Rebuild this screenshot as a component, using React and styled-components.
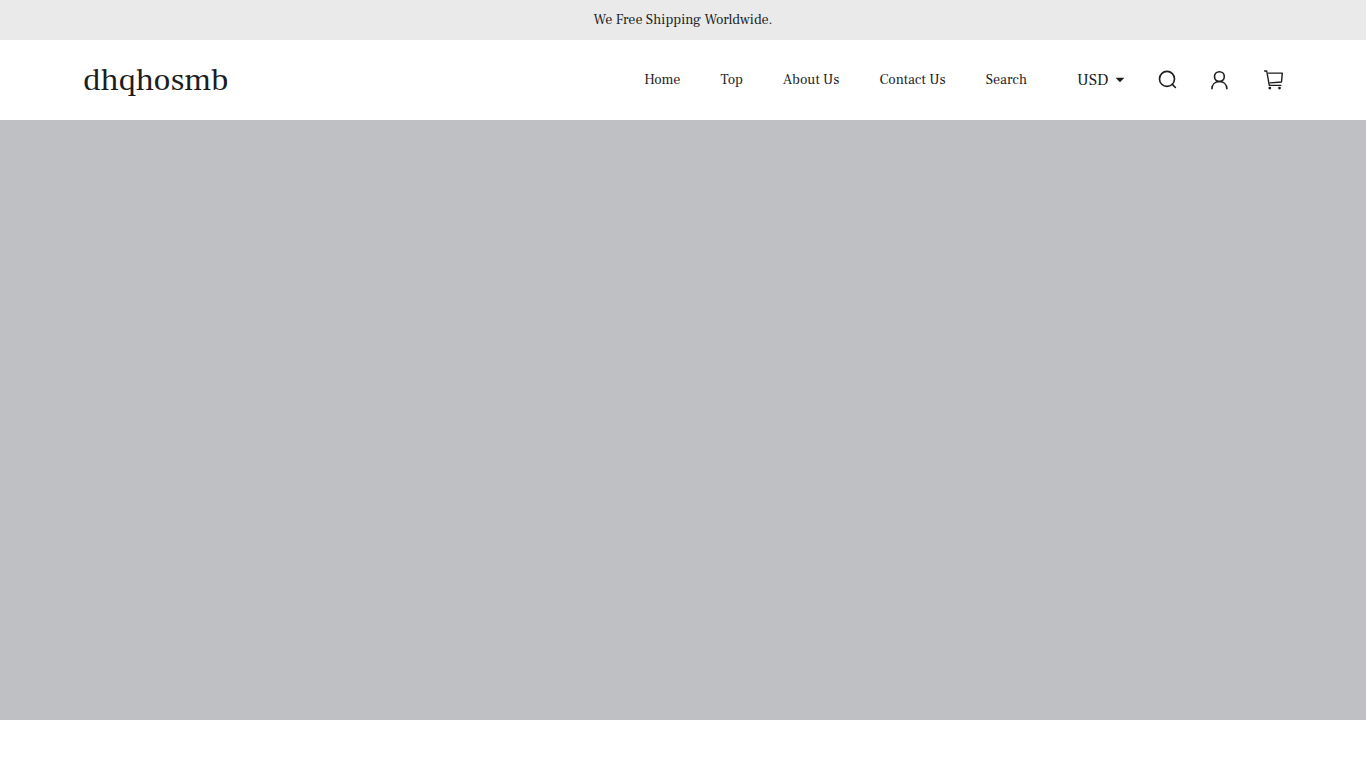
import React from "react";
import styled, { createGlobalStyle } from "styled-components";

const GlobalStyle = createGlobalStyle`
  *, *::before, *::after { box-sizing: border-box; }
  body {
    margin: 0;
    background: #fff;
    color: #1c1d1d;
    font-family: "Frank Ruhl Libre", "DejaVu Serif Condensed", "Liberation Serif", serif;
    font-size: 14px;
    line-height: 20px;
  }
`;

const Announcement = styled.p`
  margin: 0;
  padding: 10px 20px;
  background: #eaeaea;
  text-align: center;
`;

const Header = styled.header`
  display: flex;
  align-items: center;
  justify-content: space-between;
  max-width: 1200px;
  min-height: 80px;
  margin: 0 auto;
`;

const Logo = styled.a`
  color: inherit;
  font-size: 32px;
  line-height: 40px;
  text-decoration: none;
`;

const Tools = styled.div`
  display: flex;
  align-items: center;
`;

const Nav = styled.nav`
  display: flex;
  gap: 40px;
  margin-right: 50px;
`;

const NavLink = styled.a`
  color: inherit;
  text-decoration: none;
`;

const Currency = styled.label`
  display: flex;
  align-items: center;
  gap: 6px;
  margin-right: 32px;
`;

const CurrencySelect = styled.select`
  appearance: none;
  margin: 0;
  padding: 0;
  border: 0;
  background: none;
  color: inherit;
  font-family: inherit;
  font-size: 16px;
  line-height: 20px;
`;

const Actions = styled.div`
  display: flex;
  gap: 32px;
`;

const IconButton = styled.button`
  display: flex;
  padding: 0;
  border: 0;
  background: none;
  color: inherit;
  cursor: pointer;
`;

const Hero = styled.main`
  height: 600px;
  background: #bfc0c4;
`;

const links = ["Home", "Top", "About Us", "Contact Us", "Search"];

const Icon = ({ width = 20, children }) => (
  <svg
    width={width}
    height="20"
    viewBox={`0 0 ${width} 20`}
    fill="none"
    stroke="currentColor"
    strokeWidth="1.6"
    strokeLinecap="round"
    strokeLinejoin="round"
    aria-hidden="true"
  >
    {children}
  </svg>
);

export default function App() {
  return (
    <>
      <GlobalStyle />
      <Announcement>We Free Shipping Worldwide.</Announcement>
      <Header>
        <Logo href="#">dhqhosmb</Logo>
        <Tools>
          <Nav aria-label="Main">
            {links.map((label) => (
              <NavLink href="#" key={label}>{label}</NavLink>
            ))}
          </Nav>
          <Currency>
            <CurrencySelect aria-label="Currency" defaultValue="USD">
              <option>USD</option>
            </CurrencySelect>
            <svg width="10" height="6" viewBox="0 0 10 6" aria-hidden="true">
              <path d="M.6.8h8.8L5 5.2z" fill="currentColor" />
            </svg>
          </Currency>
          <Actions>
            <IconButton type="button" aria-label="Search">
              <Icon>
                <circle cx="10" cy="8.9" r="7.5" />
                <path d="m15.3 14.4 3.1 3.1" />
              </Icon>
            </IconButton>
            <IconButton type="button" aria-label="Account">
              <Icon>
                <circle cx="10.4" cy="6.6" r="4.9" />
                <path d="M2.9 18.6c.3-4.2 3.3-7.1 7.5-7.1s7.2 2.9 7.5 7.1" />
              </Icon>
            </IconButton>
            <IconButton type="button" aria-label="Cart">
              <Icon width={22}>
                <g strokeWidth="1.4">
                  <path d="M3.6 1h2.1l2.6 14.4h11.5" />
                  <path d="M7.4 3.1h13.9l-.8 8.9-11.4.9" />
                </g>
                <circle cx="8.8" cy="18.1" r="1.4" fill="currentColor" stroke="none" />
                <circle cx="18.5" cy="18.1" r="1.4" fill="currentColor" stroke="none" />
              </Icon>
            </IconButton>
          </Actions>
        </Tools>
      </Header>
      <Hero />
    </>
  );
}
